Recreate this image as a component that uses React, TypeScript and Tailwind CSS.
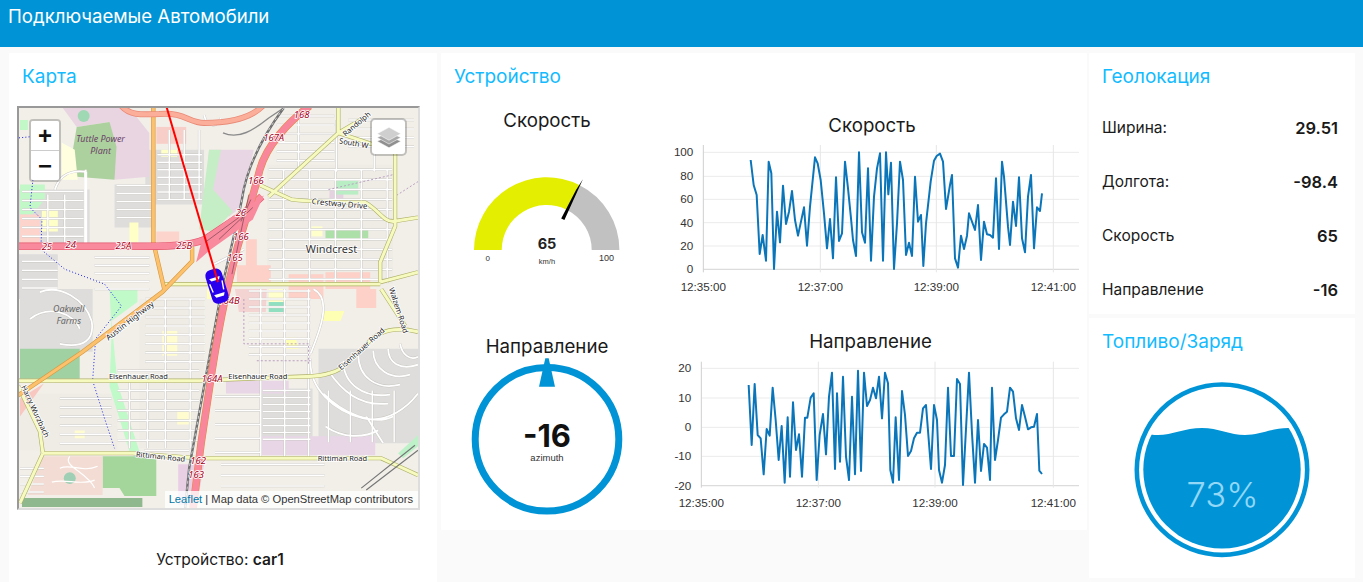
import React from 'react';

const speedPts = "272,180 281,255 290,285 299,462 308,405 318,482 326,185 334,220 342,507 351,335 360,427 369,257 378,372 387,335 396,273 405,360 414,407 432,322 441,437 450,320 465,172 473,190 482,240 492,340 501,445 510,357 519,475 528,232 537,423 546,400 555,185 564,265 573,355 579,420 588,468 597,157 606,397 615,428 624,205 633,482 642,290 651,205 660,160 669,482 678,157 685,283 693,188 702,507 711,370 720,185 729,240 738,465 747,428 756,468 765,230 774,365 783,345 790,498 798,370 812,245 822,182 830,168 840,161 849,185 858,327 870,255 876,225 885,475 894,503 903,407 912,447 921,407 927,340 945,390 954,315 963,480 972,365 981,403 990,405 999,413 1008,235 1017,447 1026,185 1032,230 1044,380 1050,435 1059,305 1068,378 1077,232 1086,415 1095,457 1104,290 1113,225 1122,445 1131,322 1140,333 1146,280";
const headingPts = "266,195 275,375 284,192 293,345 302,355 311,463 320,327 329,347 338,203 347,300 356,420 365,318 374,488 383,292 390,470 399,247 408,390 417,343 426,470 435,293 442,293 452,233 461,220 470,480 479,345 489,282 498,403 507,230 516,158 525,447 531,220 540,425 549,170 558,410 567,480 576,230 585,463 594,152 603,453 612,158 621,258 630,240 639,203 648,235 657,170 666,295 675,158 684,190 691,450 699,488 707,292 717,480 726,213 735,285 744,408 753,393 762,355 771,338 780,338 789,265 798,255 813,447 822,255 831,300 837,450 846,488 855,435 864,203 873,408 882,408 891,177 900,192 909,495 927,158 936,340 945,488 954,300 963,453 972,372 981,383 990,480 996,203 1005,420 1014,360 1023,293 1032,283 1041,275 1050,203 1059,215 1068,295 1077,330 1086,255 1095,290 1104,328 1113,322 1122,320 1131,282 1138,452 1146,462";

// x1, x2, first y, step, count
const hStripes: number[][] = [
  [158, 203, 155, 7.5, 7], [117, 155, 186, 8, 5], [22, 84, 192, 9, 6], [22, 58, 262, 9, 4], [95, 150, 258, 8, 5],
  [146, 206, 300, 9, 8], [118, 200, 372, 10, 8], [270, 394, 170, 10, 12], [250, 312, 292, 8, 9],
  [264, 312, 392, 7, 8], [278, 336, 116, 9, 7], [216, 262, 398, 14, 5], [222, 326, 466, 11, 4],
  [350, 416, 120, 9, 4], [60, 112, 400, 9, 6], [20, 44, 470, 8, 4], [145, 190, 452, 7, 2],
];
const vStripes: number[][] = [
  [285, 170, 284, 26, 5], [300, 120, 172, 38, 3], [166, 300, 450, 25, 2], [130, 375, 450, 18, 3],
  [262, 290, 460, 24, 3], [170, 130, 200, 15, 3], [48, 195, 245, 17, 2], [330, 392, 444, 22, 4],
];

const stripePath = () =>
  hStripes.map(([a, b, y, d, n]) => Array.from({ length: n }, (_, i) => `M${a} ${y + i * d}H${b}`).join('')).join('') +
  vStripes.map(([x, a, b, d, n]) => Array.from({ length: n }, (_, i) => `M${x + i * d} ${a}V${b}`).join('')).join('');

const curvy = "M86 170V245M86 172C70 170 60 175 55 190M312 360C310 390 335 412 365 420C390 425 410 408 420 395M325 395C345 415 375 428 395 418M330 372C345 395 365 408 390 405M345 362C345 385 365 400 392 396M360 356C360 378 378 392 402 386M375 352C375 370 392 382 412 376M390 350C390 364 402 372 420 366M402 345C404 356 412 362 420 358M40 293C60 285 85 300 92 322C95 340 85 350 60 345M30 320C50 305 75 315 80 330M215 265L245 250M315 290C335 300 320 335 312 355M327 428C345 440 365 440 380 432M368 418L385 445M205 115C208 128 218 128 222 118";
const courtyards = "M60 470C72 465 82 475 98 468M52 484C66 480 80 488 95 482M70 458C62 468 88 474 95 490";

const MapLabel = ({ x, y, t, r = 0, size = 8 }: { x: number; y: number; t: string; r?: number; size?: number }) => (
  <text x={x} y={y} fontSize={size} textAnchor="middle" fill="#222" stroke="#fff" strokeWidth={1.6} paintOrder="stroke" fontFamily="Noto Sans, sans-serif" transform={r ? `rotate(${r} ${x} ${y})` : undefined}>{t}</text>
);

const Shield = ({ x, y, t }: { x: number; y: number; t: string }) => (
  <text x={x} y={y} fontSize={9.5} textAnchor="middle" fontStyle="italic" fill="#a50018" stroke="#fff" strokeWidth={1.6} paintOrder="stroke" fontFamily="Noto Sans, sans-serif">{t}</text>
);

const MapTiles = () => (
  <svg viewBox="19 108 401 402" className="block w-full h-full">
    <rect x="0" y="0" width="500" height="600" fill="#f2efe9" />
    {/* residential */}
    <path d="M19 190H90V245H19Z M19 255H58V300H19Z M20 290H93V353H20Z M146 150H205V205H146Z M115 185H156V228H115Z M263 390H314V443H263Z M320 350H420V445H320Z" fill="#dedddb" />
    <path d="M268 165H395V285H268Z M140 300H205V450H140Z M20 395H118V452H20Z" fill="#efece6" />
    {/* land use */}
    <path d="M63 108H130L150 133V177L115 180L110 122L77 127Z" fill="#e9d5e2" />
    <path d="M77 127L110 122L117 147L115 180L77 177L72 157Z" fill="#add19e" />
    <circle cx="84" cy="116" r="6" fill="#9fd9b4" />
    <path d="M62 143L75 150L78 180H62Z" fill="#ffffe0" />
    <path d="M157 127H187V144H157Z" fill="#f8cfc8" />
    <path d="M210 150H255L242 208L230 217L205 205Z" fill="#e9d6e4" />
    <path d="M203 205L210 150L222 150L214 190L234 212L215 232L200 230Z" fill="#c6eec6" />
    <path d="M162 150H178V157H162Z M42 210H58V232H42Z M130 223H139V243H130Z" fill="#ffffc8" />
    <path d="M20 185H45V200L32 215H20Z M20 120H28V130H20Z" fill="#c2f7c8" />
    <path d="M20 215H40V245H20Z M157 232H180V243H157Z" fill="#fcd4cc" />
    <path d="M331 190H345V205H331Z" fill="#e5d2e0" />
    <path d="M327 230H370V241H327Z" fill="#addfa8" />
    <path d="M313 227H324V237H313Z" fill="#ffffcb" />
    <path d="M337 180H360V195H337Z" fill="#b9edc4" />
    <path d="M247 240H258V266H247Z M238 266H272V285H238Z M290 275H325V300H290Z M327 273H372V290H327Z M358 290H378V309H358Z" fill="#fdd0c8" />
    <path d="M236 290H268L267 313H240Z" fill="#f4d3d3" />
    <path d="M270 290H287V303H270Z" fill="#ffffcb" />
    <path d="M270 303H286V313H270Z" fill="#8fdfc0" />
    <path d="M208 290H222V300H208Z M212 275H222V290H212Z" fill="#ffffb9" />
    <path d="M325 312H346L342 322H322Z M287 339H297L300 350H288Z" fill="#ffffb4" />
    <path d="M163 332H178V357H163Z M178 413H193V426H178Z M75 432H85V440H75Z" fill="#fffccf" />
    <path d="M20 350H80V380H20Z" fill="#9fd1a2" />
    <path d="M115 290H138V303L112 322L118 385L140 453H130L110 388L112 335L110 290Z" fill="#c0fac9" />
    <path d="M20 400L44 385L20 418Z" fill="#f7c7c0" />
    <path d="M227 382H290V395H227Z M263 438H377V457H263Z" fill="#e8d5e6" />
    <path d="M400 455L420 437V448L405 460Z" fill="#bdf2c9" />
    <path d="M103 458H157V498H125L120 490H103Z" fill="#a4d69b" />
    <path d="M43 458H103V497H28Z" fill="#f3dcd4" />
    <path d="M179 466H205L198 507H179Z" fill="#e8cfe4" />
    <path d="M22 500H143V509H22Z" fill="#8fb88f" />
    <circle cx="70" cy="480" r="6" fill="#9fcfb4" />
    {/* streets */}
    <g fill="none">
      <path d={stripePath()} stroke="#c9c7c3" strokeWidth="2.4" />
      <path d={curvy} stroke="#c9c7c3" strokeWidth="2.6" />
      <path d={stripePath()} stroke="#fff" strokeWidth="1.5" />
      <path d={curvy} stroke="#fff" strokeWidth="1.8" />
      <path d={courtyards} stroke="#fff" strokeWidth="1.2" />
      <path d="M86 172V245" stroke="#fff" strokeWidth="3" />
      <path d="M224 133C240 140 255 130 270 118L285 108" stroke="#8a8a8a" strokeWidth="1.4" />
      <path d="M330 190L395 175M395 198L420 182M245 300V345H310V365M258 362H312" stroke="#b89ec0" strokeWidth="1" strokeDasharray="2 2" />
      {/* stream */}
      <path d="M19 138L50 135M33 180L30 208L42 220M42 222L41 250L65 270L105 285L122 307L96 340L93 382L105 420L115 450" stroke="#1a22e8" strokeWidth="1" strokeDasharray="1 2.2" />
      {/* yellow roads */}
      <g stroke="#aeb06a" strokeWidth="4.2">
        <path id="y" d="M18 382H200L300 378C320 378 335 376 345 368L367 347C380 330 400 328 420 333M43 455H133L200 460H383L420 477M43 455L20 505M18 387L40 433L43 455M260 185L293 200C320 203 345 203 367 203C380 210 385 222 395 222L420 218M270 197L340 133L367 117M340 106V133L382 147M397 150V227L382 263V283M163 285H382M382 283L420 273M383 290L407 327" />
      </g>
      <use href="#y" stroke="#f7fabf" strokeWidth="3" />
      {/* orange */}
      <path d="M154 106V243L165 290M18 397L83 353L163 293L193 262V248" stroke="#d7983f" strokeWidth="4.4" />
      <path d="M154 106V243L165 290M18 397L83 353L163 293L193 262V248" stroke="#fcc16d" strokeWidth="3.2" />
      <path d="M122 106C130 115 140 115 160 114C185 112 190 123 205 123C225 123 250 120 264 106" stroke="#e98a77" strokeWidth="6" />
      <path d="M122 106C130 115 140 115 160 114C185 112 190 123 205 123C225 123 250 120 264 106" stroke="#fbae9a" strokeWidth="4.4" />
      {/* rail */}
      <path d="M285 108C265 135 248 165 243 200C235 240 225 275 221 300L190 470L186 510" stroke="#6f6f6f" strokeWidth="2.4" />
      <path d="M285 108C265 135 248 165 243 200C235 240 225 275 221 300L190 470L186 510" stroke="#e8e8e8" strokeWidth="0.8" strokeDasharray="3 3" />
      {/* motorway */}
      <path d="M19 247H130C165 247 190 247 206 240L245 214L263 197" stroke="#e4546a" strokeWidth="7.5" />
      <path d="M19 247H130C165 247 190 247 206 240L245 214L263 197" stroke="#f9899c" strokeWidth="6.4" />
      <path d="M311 106C290 122 268 145 261 170C255 195 245 225 238 250C228 290 222 315 213 372L202 445L194 510" stroke="#e4873a" strokeWidth="7.6" />
      <path d="M311 106C290 122 268 145 261 170C255 195 245 225 238 250C228 290 222 315 213 372L202 445L194 510" stroke="#f9879b" strokeWidth="6.6" />
    </g>
    <path d="M197 263L203 240L243 210L265 196L254 220L212 250Z" fill="#f9899c" />
    <path d="M206 243L240 218M242 222L252 200M220 240L254 208M233 275L250 195" stroke="#5e3b43" strokeWidth="0.6" fill="none" />
    <path d="M363 490L417 447M368 492L420 452" stroke="#777" strokeWidth="1.2" />
    {/* labels */}
    <text x="101" y="142" fontSize="9" fontStyle="italic" textAnchor="middle" fill="#6b4468" fontFamily="Noto Sans, sans-serif">Tuttle Power</text>
    <text x="101" y="154" fontSize="9" fontStyle="italic" textAnchor="middle" fill="#6b4468" fontFamily="Noto Sans, sans-serif">Plant</text>
    <text x="69" y="313" fontSize="9" fontStyle="italic" textAnchor="middle" fill="#666" fontFamily="Noto Sans, sans-serif">Oakwell</text>
    <text x="69" y="325" fontSize="9" fontStyle="italic" textAnchor="middle" fill="#666" fontFamily="Noto Sans, sans-serif">Farms</text>
    <text x="333" y="254" fontSize="11" textAnchor="middle" fill="#333" stroke="#fff" strokeWidth="1.5" paintOrder="stroke" fontFamily="Noto Sans, sans-serif">Windcrest</text>
    <MapLabel x={341} y={207} t="Crestway Drive" r={5} />
    <MapLabel x={139} y={380} t="Eisenhauer Road" size={7.5} />
    <MapLabel x={259} y={380} t="Eisenhauer Road" size={7.5} />
    <MapLabel x={365} y={352} t="Eisenhauer Road" r={-42} size={7.5} />
    <MapLabel x={132} y={324} t="Austin Highway" r={-38} />
    <MapLabel x={33} y={414} t="Harry Wurzbach" r={65} size={7.5} />
    <MapLabel x={161} y={461} t="Rittiman Road" r={6} size={7.5} />
    <MapLabel x={344} y={463} t="Rittiman Road" size={7.5} />
    <MapLabel x={398} y={312} t="Walzem Road" r={72} size={7.5} />
    <MapLabel x={355} y={146} t="South W" r={10} size={7.5} />
    <MapLabel x={360} y={126} t="Randolph" r={-40} size={7.5} />
    <Shield x={303} y={118} t="168" />
    <Shield x={275} y={141} t="167A" />
    <Shield x={257} y={184} t="166" />
    <Shield x={242} y={217} t="26" />
    <Shield x={242} y={241} t="166" />
    <Shield x={236} y={262} t="165" />
    <Shield x={47} y={251} t="25" />
    <Shield x={71} y={249} t="24" />
    <Shield x={124} y={250} t="25A" />
    <Shield x={185} y={250} t="25B" />
    <Shield x={230} y={305} t="164B" />
    <Shield x={213} y={383} t="164A" />
    <Shield x={199} y={466} t="162" />
    <Shield x={197} y={480} t="163" />
    {/* car */}
    <g transform="translate(218 287) rotate(-17)">
      <rect x="-8.5" y="-17.5" width="17" height="35" rx="6" fill="#2800ee" />
      <path d="M-5.5 -9L5.5 -9L4 -6H-4Z M-5.5 8L5.5 8L4 11H-4Z" fill="#fff" />
      <path d="M-6.5 -4L-5.5 5M6.5 -4L5.5 5" stroke="#fff" strokeWidth="1.4" />
    </g>
    <path d="M167 106L219 283" stroke="#ff0000" strokeWidth="2" fill="none" />
  </svg>
);

const Card = ({ title, className, children }: { title: string; className: string; children: React.ReactNode }) => (
  <section className={`bg-white ${className}`}>
    <h3 className="h-[48px] flex items-center px-[13px] text-[19px] font-normal text-[#12bbff]">{title}</h3>
    {children}
  </section>
);

const LineChart = ({ y, grid, labels, vx, top, pts, bottom }: { y: number; grid: number[]; labels: string[]; vx: number[]; top: number; pts: string; bottom: number }) => (
  <svg width={427} height={175} viewBox={`0 ${y} 1281 525`} className="block">
    {grid.map((g, i) => (
      <line key={g} x1={vx[0]} x2={1257} y1={g} y2={g} stroke={i === grid.length - 1 ? '#dcdcdc' : '#ebebeb'} strokeWidth={i === grid.length - 1 ? 4 : 3} />
    ))}
    {vx.map((v, i) => (
      <line key={v} x1={v} x2={v} y1={top} y2={bottom} stroke={i === 0 ? '#cfcfcf' : '#e6e6e6'} strokeWidth={3} />
    ))}
    <polyline points={pts} fill="none" stroke="#0b75b9" strokeWidth={6} strokeLinejoin="round" />
    {grid.map((g, i) => (
      <text key={g} x={vx[0] - 30} y={g + 12} textAnchor="end" fontSize={35} fill="#333" fontFamily="Liberation Sans, sans-serif">{labels[i]}</text>
    ))}
    {vx.map((t, i) => (
      <text key={t} x={t} y={bottom + 57} textAnchor="middle" fontSize={35} fill="#333" fontFamily="Liberation Sans, sans-serif">{['12:35:00', '12:37:00', '12:39:00', '12:41:00'][i]}</text>
    ))}
  </svg>
);

const Gauge = () => (
  <svg width={219} height={185} viewBox="441 134 219 185" className="block">
    <path d="M474 250A72.7 72.7 0 0 1 579.7 185.2L567.1 209.9A45 45 0 0 0 501.7 250Z" fill="#e4ee00" />
    <path d="M579.7 185.2A72.7 72.7 0 0 1 619.4 250H591.7A45 45 0 0 0 567.1 209.9Z" fill="#c1c1c1" />
    <path d="M561.2 218.6L564.4 220L577.5 191L582.9 179.3L576 190Z" fill="#000" />
    <text x="547" y="249" textAnchor="middle" fontSize="14.5" fontWeight="700" fill="#222" fontFamily="Inter, sans-serif">65</text>
    <text x="487.7" y="260.5" textAnchor="middle" fontSize="8" fill="#333" fontFamily="Liberation Sans, sans-serif">0</text>
    <text x="606.5" y="260.5" textAnchor="middle" fontSize="9" fill="#333" fontFamily="Liberation Sans, sans-serif">100</text>
    <text x="547" y="263.5" textAnchor="middle" fontSize="7.5" fill="#333" fontFamily="Liberation Sans, sans-serif">km/h</text>
  </svg>
);

const Compass = () => (
  <svg width={219} height={173} viewBox="441 357 219 173" className="block">
    <circle cx="547" cy="438.3" r="71.8" fill="none" stroke="#0094d6" strokeWidth="7" />
    <path d="M545.3 357.3H548.7L555 385.7H539Z" fill="#0094d6" />
    <text x="547" y="446" textAnchor="middle" fontSize="31" fontWeight="700" fill="#111" fontFamily="Inter, sans-serif">-16</text>
    <text x="547" y="459.5" textAnchor="middle" fontSize="9.5" fill="#333" fontFamily="Liberation Sans, sans-serif">azimuth</text>
  </svg>
);

const FuelLevel = () => (
  <svg width={185} height={185} viewBox="1130 380 185 185" className="block mx-auto">
    <defs>
      <clipPath id="fuel"><circle cx="1222" cy="472.7" r="78.7" /></clipPath>
    </defs>
    <circle cx="1222" cy="472.7" r="85.2" fill="none" stroke="#0094d6" strokeWidth="4.6" />
    <path clipPath="url(#fuel)" d="M1130 433C1145 437 1150 438 1158 438C1172 438 1185 431 1202 431C1218 431 1230 438 1245 438C1260 438 1272 431 1288 431C1300 431 1310 434 1320 437V560H1130Z" fill="#0094d6" />
    <text x="1222.5" y="510" textAnchor="middle" fontSize="34.5" fontWeight="300" fill="#93d8f7" fontFamily="Inter, sans-serif">73%</text>
  </svg>
);

const geoRows = [
  ['Ширина:', '29.51'],
  ['Долгота:', '-98.4'],
  ['Скорость', '65'],
  ['Направление', '-16'],
];

export default function App() {
  return (
    <div className="h-[582px] overflow-hidden bg-[#fafafa] font-['Inter',sans-serif] text-[#1a1a1a]">
      <header className="h-[47px] bg-[#0094d6] px-[8px] pt-[4px] text-[18.6px] leading-[24px] text-white">
        Подключаемые Автомобили
      </header>

      <main className="flex pt-[6px] pl-[9px]">
        <Card title="Карта" className="w-[428px] h-[530px] shrink-0">
          <div className="relative mx-[8px] mt-[5px] h-[404px] w-[403px] border-2 border-t-[#999] border-l-[#999] border-r-[#ddd] border-b-[#ddd] overflow-hidden">
            <MapTiles />
            <div className="absolute left-[10px] top-[11px] w-[32px] rounded-[4px] border-2 border-black/20 bg-clip-padding font-['Liberation_Sans',sans-serif] text-[#111]">
              <div className="flex h-[30px] items-center justify-center rounded-t-[2px] border-b border-[#ccc] bg-white text-[24px] font-bold leading-none">+</div>
              <div className="flex h-[29px] items-center justify-center rounded-b-[2px] bg-white text-[24px] font-bold leading-none">−</div>
            </div>
            <div className="absolute right-[11px] top-[10px] flex h-[38px] w-[37px] items-center justify-center rounded-[5px] border-2 border-black/20 bg-white bg-clip-padding">
              <svg width="28" height="28" viewBox="0 0 26 26">
                <path d="M13 12L2 17L13 23L24 17Z" fill="#8f8f8f" stroke="#fff" strokeWidth="0.5" />
                <path d="M13 8.5L2 13.5L13 19.5L24 13.5Z" fill="#a8a8a8" stroke="#fff" strokeWidth="0.5" />
                <path d="M13 4L2 10L13 16L24 10Z" fill="#cfcfcf" stroke="#fff" strokeWidth="0.5" />
              </svg>
            </div>
            <div className="absolute bottom-0 right-0 bg-white/80 pl-[4px] pr-[5px] text-[11.2px] leading-[17px] text-[#333] font-['Liberation_Sans',sans-serif]">
              <span className="text-[#0078a8]">Leaflet</span> | Map data © OpenStreetMap contributors
            </div>
          </div>
          <p className="mt-[39px] pr-[6px] text-center text-[15.6px] leading-[22px]">
            Устройство: <b className="font-semibold">car1</b>
          </p>
        </Card>

        <Card title="Устройство" className="ml-[4px] w-[646px] h-[477px] shrink-0">
          <div className="grid grid-cols-[219px_427px] grid-rows-[218px_1fr]">
            <div>
              <div className="pt-[6px] pr-[7px] text-center text-[18.7px] leading-[27px]">Скорость</div>
              <Gauge />
            </div>
            <div>
              <div className="pt-[11px] pr-[3px] text-center text-[18.7px] leading-[28px]">Скорость</div>
              <LineChart y={120} top={135} bottom={517} pts={speedPts} grid={[157, 229, 298, 368, 438, 508]} labels={['100', '80', '60', '40', '20', '0']} vx={[130, 481, 829, 1180]} />
            </div>
            <div>
              <div className="pt-[17px] pr-[7px] text-center text-[18.7px] leading-[22px]">Направление</div>
              <Compass />
            </div>
            <div>
              <div className="pt-[9px] pr-[6px] text-center text-[18.7px] leading-[27px]">Направление</div>
              <LineChart y={105} top={125} bottom={503} pts={headingPts} grid={[145, 234, 322, 409, 497]} labels={['20', '10', '0', '-10', '-20']} vx={[124, 475, 825, 1180]} />
            </div>
          </div>
        </Card>

        <div className="ml-[2px] flex w-[266px] shrink-0 flex-col gap-[4px]">
          <Card title="Геолокация" className="h-[261px]">
            <div className="flex flex-col gap-[32px] px-[13px] pt-[16px] pr-[17px] text-[15.5px] leading-[22px]">
              {geoRows.map(([label, value]) => (
                <div key={label} className="flex justify-between">
                  <span>{label}</span>
                  <b className="font-semibold text-[16.5px]">{value}</b>
                </div>
              ))}
            </div>
          </Card>
          <Card title="Топливо/Заряд" className="h-[260px]">
            <div className="pt-[11px]">
              <FuelLevel />
            </div>
          </Card>
        </div>
      </main>
    </div>
  );
}
